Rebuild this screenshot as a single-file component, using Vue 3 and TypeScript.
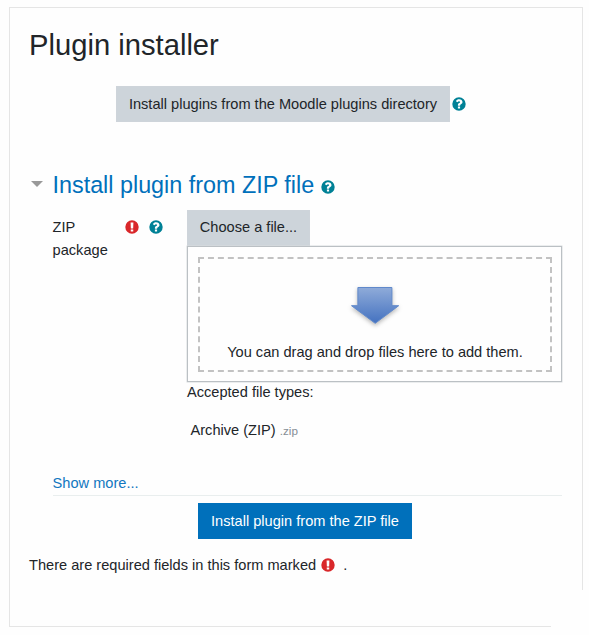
<script setup lang="ts">
const helpPath =
  'M7 .3a6.7 6.7 0 1 0 0 13.4a6.7 6.7 0 0 0 0-13.4zM5.9 9.6h2.2v2H5.9zM7.15 2.3c2 0 3.35 1.15 3.35 2.7c0 1.25-.75 1.8-1.5 2.2c-.65.38-.85.55-.85.95v.6H5.9v-.8c0-1.1.65-1.55 1.3-1.9c.6-.32.85-.5.85-.9c0-.5-.4-.8-1-.8c-.65 0-1.05.35-1.55 1L3.9 4.15C4.65 2.95 5.65 2.3 7.15 2.3z'
const requiredPath =
  'M7 .3a6.7 6.7 0 1 0 0 13.4a6.7 6.7 0 0 0 0-13.4zM5.6 2.4h2.8l-.25 6h-2.3zM5.75 9.4h2.5v2.2h-2.5z'
const fileTypes: { name: string; extension: string }[] = [{ name: 'Archive (ZIP)', extension: '.zip' }]
</script>

<template>
  <main class="card">
    <h2 class="title">Plugin installer</h2>
    <div class="directory">
      <button class="btn secondary wide" type="button">Install plugins from the Moodle plugins directory</button>
      <svg class="icon help" viewBox="0 0 14 14"><path fill-rule="evenodd" :d="helpPath" /></svg>
    </div>

    <section class="form">
      <h3 class="legend">
        <svg class="caret" viewBox="0 0 12 6"><path d="M0 0h12l-6 6z" /></svg>
        <span>Install plugin from ZIP file</span>
        <svg class="icon help" viewBox="0 0 14 14"><path fill-rule="evenodd" :d="helpPath" /></svg>
      </h3>
      <div class="row">
        <div class="label">
          <span class="label-text">ZIP package</span>
          <span class="marks">
            <svg class="icon required" viewBox="0 0 14 14"><path fill-rule="evenodd" :d="requiredPath" /></svg>
            <svg class="icon help" viewBox="0 0 14 14"><path fill-rule="evenodd" :d="helpPath" /></svg>
          </span>
        </div>
        <div class="field">
          <button class="btn secondary choose" type="button">Choose a file...</button>
          <div class="picker">
            <div class="dropzone">
              <svg class="arrow" viewBox="0 0 56 46">
                <defs>
                  <linearGradient id="arrowFill" x1="0" y1="0" x2="0" y2="1">
                    <stop offset="0" stop-color="#8fabd9" />
                    <stop offset="1" stop-color="#4472c0" />
                  </linearGradient>
                </defs>
                <path d="M10.9 4.5h34v18.2h6.8L28.2 40.3L4.5 22.7h6.4z" fill="url(#arrowFill)" stroke="#6089cb" />
              </svg>
              <span>You can drag and drop files here to add them.</span>
            </div>
          </div>
          <p class="accepted">Accepted file types:</p>
          <ul class="types">
            <li v-for="type in fileTypes" :key="type.extension">
              {{ type.name }} <small>{{ type.extension }}</small>
            </li>
          </ul>
        </div>
      </div>
      <div class="more"><a>Show more...</a></div>
    </section>

    <div class="actions">
      <button class="btn primary" type="button">Install plugin from the ZIP file</button>
    </div>
    <p class="note">
      <span>There are required fields in this form marked</span>
      <svg class="icon required" viewBox="0 0 14 14"><path fill-rule="evenodd" :d="requiredPath" /></svg>
      <span class="dot">.</span>
    </p>
  </main>
</template>

<style>
body {
  background: #fefefe;
}
</style>

<style scoped>
.card {
  position: relative;
  box-sizing: border-box;
  width: 574px;
  height: 620px;
  margin: 7px 0 0 9px;
  padding: 0 20px 0 19px;
  border: 1px solid #e5e5e5;
  font: 14.6px/23px "Liberation Sans", Arial, sans-serif;
  color: #212529;
}
.card::after {
  content: "";
  position: absolute;
  right: -1px;
  bottom: -1px;
  width: 32px;
  height: 37px;
  background: #fefefe;
}
.title {
  margin: 0;
  padding: 20px 0 0;
  font-size: 29.2px;
  line-height: 35px;
  font-weight: 400;
}
.directory {
  display: flex;
  align-items: center;
  margin: 23px 0 0 87px;
  gap: 2px;
}
.directory .icon {
  margin-top: -1px;
}
.btn {
  box-sizing: border-box;
  height: 36px;
  padding: 0;
  border: 1px solid #ced4da;
  border-radius: 0;
  font: inherit;
  color: #212529;
  white-space: nowrap;
}
.secondary {
  background: #cdd4da;
}
.wide {
  width: 334px;
}
.icon {
  display: block;
  flex: none;
  width: 14px;
  height: 14px;
}
.help {
  fill: #008196;
}
.required {
  fill: #d9272a;
}
.legend {
  display: flex;
  align-items: center;
  height: 28px;
  margin: 49px 0 0 2px;
  font-size: 23.35px;
  font-weight: 400;
  color: #0070bb;
}
.legend .icon {
  margin: 3px 0 0 7px;
}
.caret {
  width: 12px;
  height: 6px;
  margin-right: 9.5px;
  margin-top: -2px;
  fill: #999;
}
.row {
  display: flex;
  margin: 11px 0 0 23.6px;
}
.label {
  display: flex;
  width: 134.4px;
  padding-top: 6px;
}
.label-text {
  width: 72px;
}
.marks {
  display: flex;
  gap: 10px;
  padding-top: 4px;
}
.field {
  flex: 1;
}
.choose {
  display: block;
  width: 123px;
  padding-bottom: 2px;
}
.picker {
  height: 136px;
  box-sizing: border-box;
  padding: 10px 9px 9px 10px;
  border: 1px solid #bbc0c4;
  box-shadow: 0 0 0 0.5px #d9dcdf;
}
.dropzone {
  box-sizing: border-box;
  height: 115px;
  border: 2px dashed #c2c2c2;
  display: flex;
  flex-direction: column;
  align-items: center;
}
.arrow {
  width: 56px;
  height: 46px;
  margin: 24px 0 12px;
  filter: drop-shadow(0 2px 2px rgb(0 0 0 / 28%));
}
.accepted {
  margin: -1px 0 0;
}
.types {
  list-style: none;
  margin: 15px 0 0;
  padding: 0 0 0 3.5px;
}
.types small {
  font-size: 11.7px;
  color: #868e96;
}
.more {
  box-sizing: border-box;
  height: 24px;
  margin: 30px 0 0 23.6px;
  border-bottom: 1px solid #e9eeee;
  color: #1177c0;
}
.actions {
  margin: 7px 0 0 169px;
}
.primary {
  display: block;
  width: 214px;
  background: #0070bb;
  border-color: #0070bb;
  color: #fff;
}
.note {
  display: flex;
  align-items: center;
  margin: 15px 0 0;
}
.note .icon {
  margin: -1px 8px 0 5px;
}
</style>
